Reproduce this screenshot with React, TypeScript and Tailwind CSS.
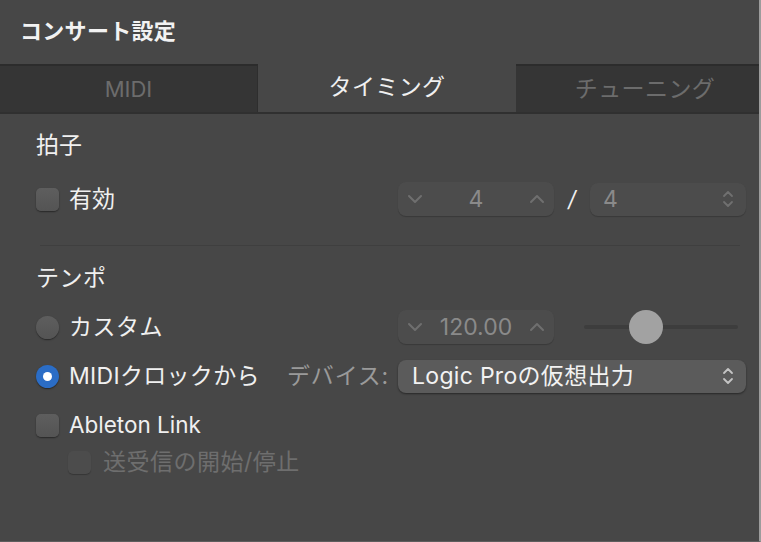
import React from "react";

const FONT = { fontFamily: '"Inter", "Noto Sans CJK JP", sans-serif' };

function ChevDown({ color = "#777777" }: { color?: string }) {
  return (
    <svg width="16" height="10" viewBox="0 0 16 10" fill="none">
      <path d="M2 2 L8 8 L14 2" stroke={color} strokeWidth="2" strokeLinecap="round" strokeLinejoin="round" />
    </svg>
  );
}
function ChevUp({ color = "#777777" }: { color?: string }) {
  return (
    <svg width="16" height="10" viewBox="0 0 16 10" fill="none">
      <path d="M2 8 L8 2 L14 8" stroke={color} strokeWidth="2" strokeLinecap="round" strokeLinejoin="round" />
    </svg>
  );
}
function UpDown({ color = "#777777" }: { color?: string }) {
  return (
    <svg width="12" height="20" viewBox="0 0 12 20" fill="none">
      <path d="M2 7 L6 3 L10 7" stroke={color} strokeWidth="1.8" strokeLinecap="round" strokeLinejoin="round" />
      <path d="M2 13 L6 17 L10 13" stroke={color} strokeWidth="1.8" strokeLinecap="round" strokeLinejoin="round" />
    </svg>
  );
}

function Checkbox({ disabled = false }: { disabled?: boolean }) {
  return (
    <div
      className={
        disabled
          ? "w-[23px] h-[23px] rounded-[5px] bg-[#4c4c4c] shadow-[0_1px_1px_rgba(0,0,0,0.25)]"
          : "w-[23px] h-[23px] rounded-[5px] bg-gradient-to-b from-[#5e5e5e] to-[#545454] shadow-[0_1px_1.5px_rgba(0,0,0,0.45)]"
      }
    />
  );
}

function Radio({ checked = false }: { checked?: boolean }) {
  if (checked) {
    return (
      <div className="w-[23px] h-[23px] rounded-full bg-[#2b6dc6] flex items-center justify-center shadow-[0_1px_1.5px_rgba(0,0,0,0.45)]">
        <div className="w-[9px] h-[9px] rounded-full bg-white" />
      </div>
    );
  }
  return (
    <div className="w-[23px] h-[23px] rounded-full bg-gradient-to-b from-[#5e5e5e] to-[#545454] shadow-[0_1px_1.5px_rgba(0,0,0,0.45)]" />
  );
}

function Stepper({ value }: { value: string }) {
  return (
    <div className="w-[156px] h-[34px] rounded-[8px] bg-[#4c4c4c] shadow-[0_1px_1px_rgba(0,0,0,0.2)] flex items-center px-[9px]">
      <ChevDown color="#6f6f6f" />
      <div className="flex-1 text-center text-[23px] text-[#8a8a8a] leading-none">{value}</div>
      <ChevUp color="#6f6f6f" />
    </div>
  );
}

export default function App() {
  return (
    <div
      style={FONT}
      className="w-[761px] h-[542px] bg-[#474747] border-r-[2px] border-r-[#9c9c9c] border-b border-b-[#5e5e5e] flex flex-col overflow-hidden select-none"
    >
      {/* Title */}
      <div className="h-[64px] flex items-center pl-[20px] pb-[1px]">
        <span className="text-[22px] font-bold text-[#f2f2f2] tracking-[0.3px]">コンサート設定</span>
      </div>

      {/* Tabs */}
      <div className="h-[50px] flex border-b-[2px] border-b-[#303030] overflow-hidden">
        <div className="w-[258px] shrink-0 bg-[#353535] border-t-[2px] border-t-[#2c2c2c] border-r border-r-[#2e2e2e] flex items-center justify-center text-[22px] text-[#6c6c6c]">
          MIDI
        </div>
        <div className="w-[258px] shrink-0 flex items-center justify-center text-[23px] tracking-[0.4px] text-[#f0f0f0] pb-[1px]">
          タイミング
        </div>
        <div className="w-[258px] shrink-0 bg-[#353535] border-t-[2px] border-t-[#2c2c2c] flex items-center justify-center text-[23px] tracking-[0.4px] text-[#6c6c6c]">
          チューニング
        </div>
      </div>

      {/* Content */}
      <div className="flex flex-col pl-[36px] pr-[13px] text-[#f0f0f0] text-[22.5px]">
        <div className="h-[32px] mt-[15px] flex items-center text-[23px]">拍子</div>

        <div className="h-[36px] mt-[20px] flex items-center">
          <div className="flex-1 flex items-center gap-[10px]">
            <Checkbox />
            <span className="text-[23px]">有効</span>
          </div>
          <div className="w-[348px] flex items-center">
            <Stepper value="4" />
            <div className="w-[36px] text-center text-[22px] text-[#f0f0f0] italic">/</div>
            <div className="flex-1 h-[33px] rounded-[8px] bg-[#4c4c4c] shadow-[0_1px_1px_rgba(0,0,0,0.2)] flex items-center pl-[13px] pr-[12px]">
              <span className="flex-1 text-[23px] text-[#8a8a8a] leading-none">4</span>
              <UpDown color="#707070" />
            </div>
          </div>
        </div>

        <div className="h-[1px] bg-[#3f3f3f] mt-[28px] ml-[4px] mr-[6px]" />

        <div className="h-[32px] mt-[16px] flex items-center text-[23px] tracking-[0.5px]">テンポ</div>

        <div className="h-[36px] mt-[15px] flex items-center">
          <div className="flex-1 flex items-center gap-[10px]">
            <Radio />
            <span className="text-[23px] tracking-[0.5px]">カスタム</span>
          </div>
          <div className="w-[348px] flex items-center">
            <Stepper value="120.00" />
            <div className="relative ml-[30px] w-[154px] h-[36px] flex items-center">
              <div className="w-full h-[4px] rounded-full bg-[#3d3d3d]" />
              <div className="absolute left-[45px] top-[1px] w-[34px] h-[34px] rounded-full bg-[#a2a2a2]" />
            </div>
          </div>
        </div>

        <div className="h-[36px] mt-[13px] flex items-center">
          <div className="flex-1 flex items-center gap-[10px]">
            <Radio checked />
            <span className="text-[23px] tracking-[0.3px]">MIDIクロックから</span>
            <span className="ml-auto mr-[9px] text-[23px] tracking-[0.8px] text-[#9a9a9a]">デバイス:</span>
          </div>
          <div className="w-[348px] h-[33px] rounded-[8px] bg-[#5b5b5b] shadow-[0_1px_2px_rgba(0,0,0,0.45)] flex items-center pl-[14px] pr-[12px]">
            <span className="flex-1 text-[23px] tracking-[0.3px] text-[#f2f2f2]">Logic Proの仮想出力</span>
            <UpDown color="#c4c4c4" />
          </div>
        </div>

        <div className="h-[36px] mt-[13px] flex items-center gap-[10px]">
          <Checkbox />
          <span>Ableton Link</span>
        </div>

        <div className="h-[34px] mt-[2px] ml-[32px] flex items-center gap-[12px]">
          <Checkbox disabled />
          <span className="text-[#6e6e6e] text-[23px] tracking-[0.5px]">送受信の開始/停止</span>
        </div>
      </div>
    </div>
  );
}
